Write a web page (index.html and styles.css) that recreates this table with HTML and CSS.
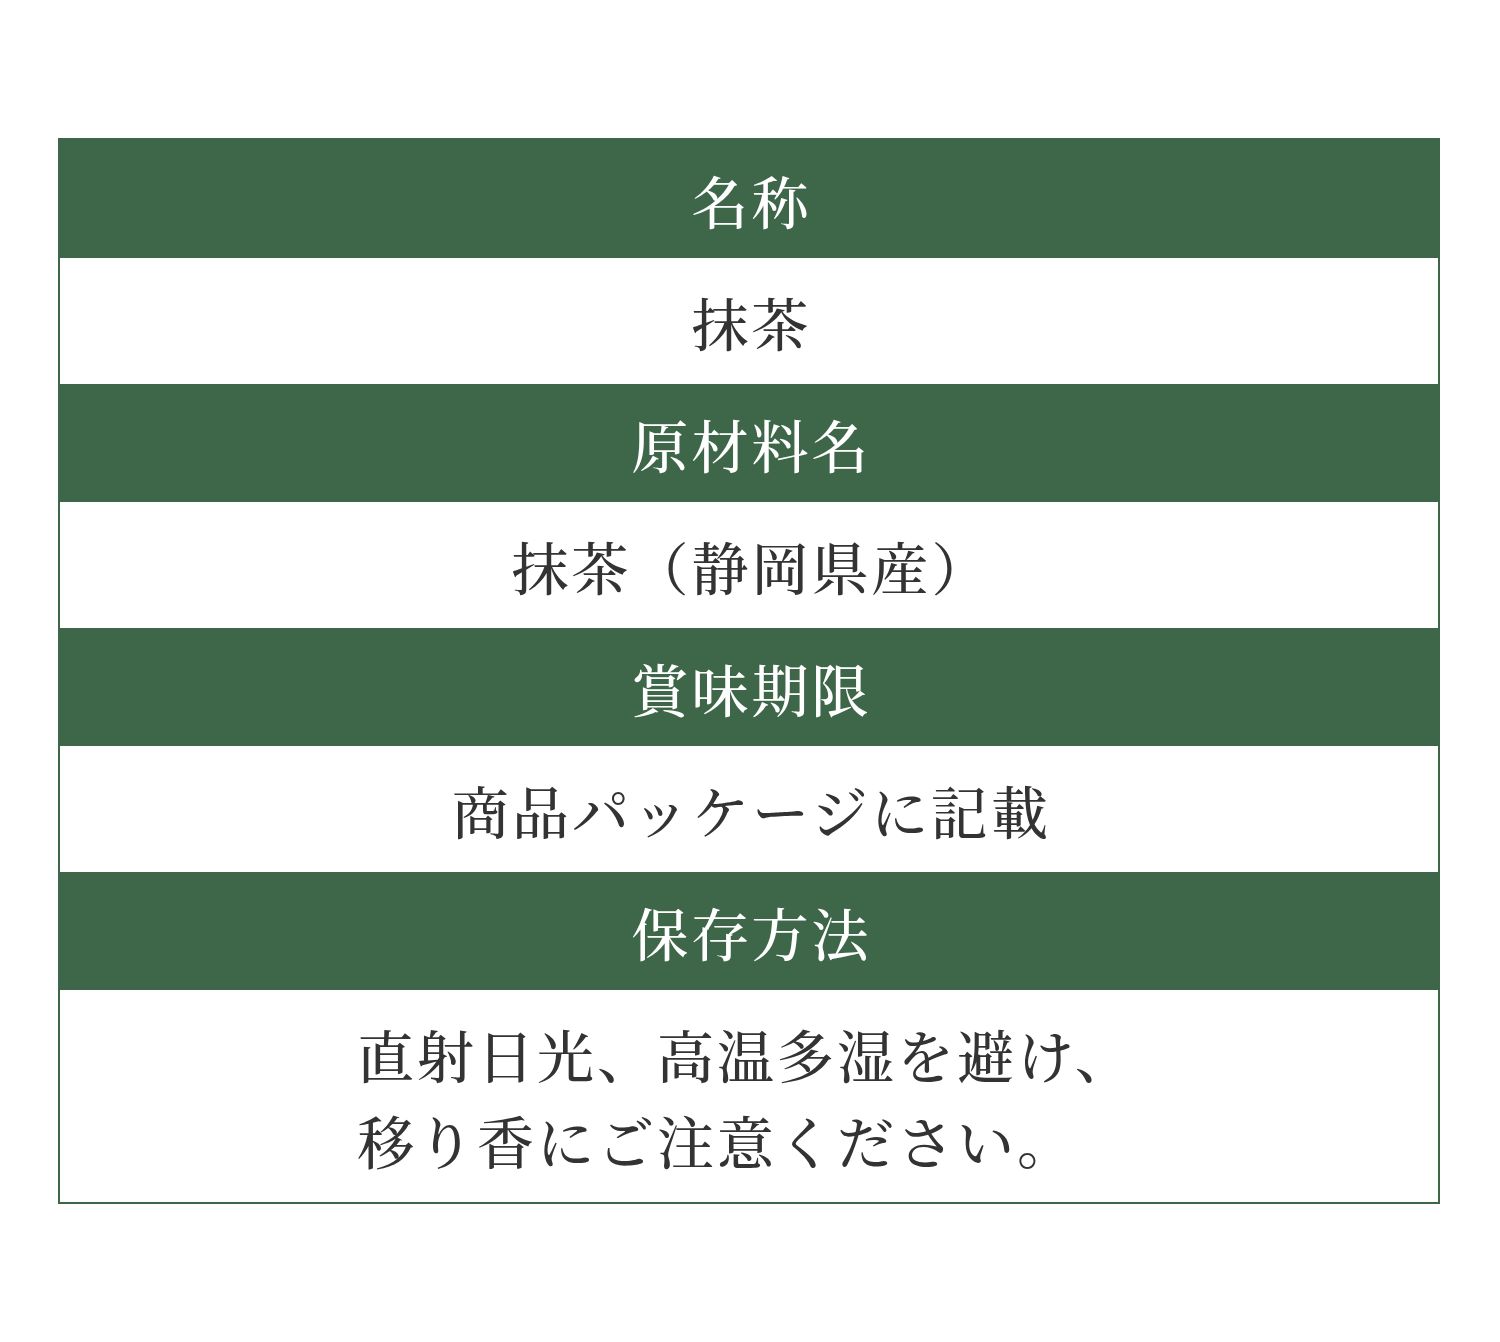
FILE: index.html
```html
<!DOCTYPE html>
<html lang="ja">
<head>
<meta charset="utf-8">
<title>商品情報</title>
<link rel="stylesheet" href="styles.css">
</head>
<body>
<div class="spec">
  <div class="head">名称</div>
  <div class="body">抹茶</div>
  <div class="head">原材料名</div>
  <div class="body">抹茶（静岡県産）</div>
  <div class="head">賞味期限</div>
  <div class="body">商品パッケージに記載</div>
  <div class="head">保存方法</div>
  <div class="body multi"><span class="block">直射日光、高温多湿を避け、<br>移り香にご注意ください。</span></div>
</div>
</body>
</html>
```
FILE: styles.css
```css
html, body {
  margin: 0;
  padding: 0;
  background: #ffffff;
}
body {
  font-family: "Noto Serif CJK JP", "Noto Serif JP", "Liberation Serif", "Noto Sans CJK JP", serif;
}
.spec {
  box-sizing: border-box;
  width: 1382px;
  margin: 138px 0 0 58px;
  border: 2px solid #3e674a;
  display: flex;
  flex-direction: column;
}
.head, .body {
  font-size: 57px;
  font-weight: 500;
  line-height: 86px;
  letter-spacing: 3px;
  text-align: center;
}
.head {
  background: #3e674a;
  color: #ffffff;
  padding: 16px 0 16px 5px;
}
.body {
  background: #ffffff;
  color: #333333;
  padding: 20px 0 20px 5px;
}
.body.multi {
  padding: 20px 6px 20px 0;
}
.block {
  display: inline-block;
  text-align: left;
}
```
